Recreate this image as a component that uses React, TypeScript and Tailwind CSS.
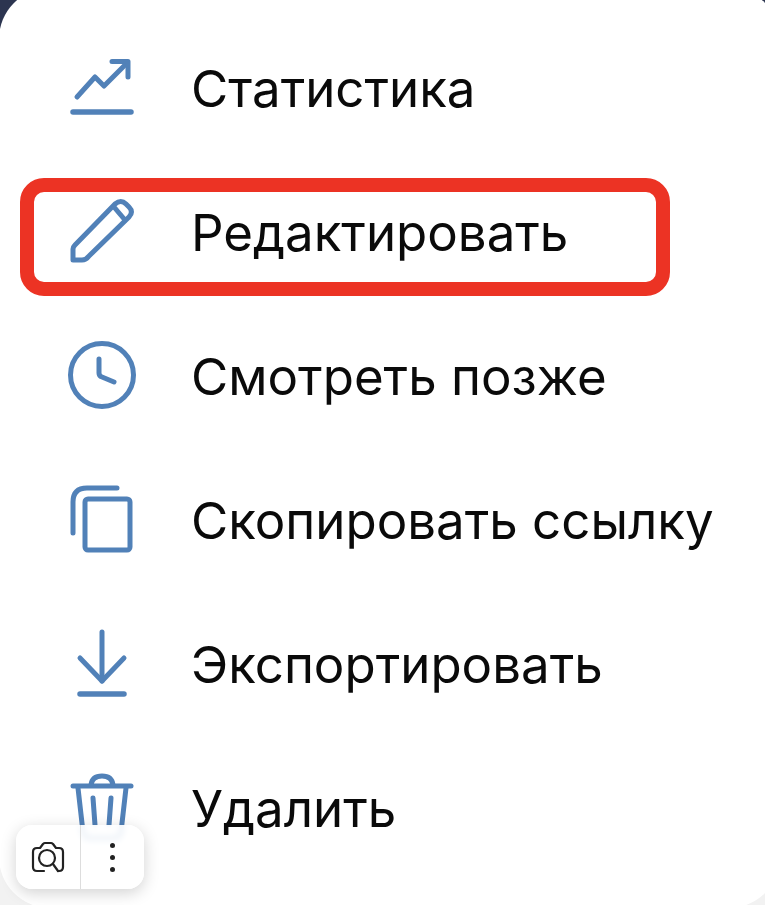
import type { ReactNode } from "react";

const icon = "h-[72px] w-[72px] shrink-0 text-[#5181b8]";

const items: { label: string; icon: ReactNode }[] = [
  {
    label: "Статистика",
    icon: (
      <svg className={icon} viewBox="0 0 72 72" fill="none" stroke="currentColor" strokeWidth="5" strokeLinecap="round" strokeLinejoin="round">
        <path d="M7 60 H65" strokeWidth="5.5" />
        <path d="M11 45 L29 25 L38 34 L61 11" />
        <path d="M46 9.5 H62 V25" />
      </svg>
    ),
  },
  {
    label: "Редактировать",
    icon: (
      <svg className={icon} viewBox="0 0 72 72" fill="none" stroke="currentColor" strokeWidth="5" strokeLinecap="round" strokeLinejoin="round">
        <path d="M7 64 L7 53 Q7 51 9 49 L49 8 Q55 3 60 8 L63 11 Q68 16 63 21 L23 60 Q20 64 16 64 Z" />
        <path d="M48 11 L59 24" />
      </svg>
    ),
  },
  {
    label: "Смотреть позже",
    icon: (
      <svg className={icon} viewBox="0 0 72 72" fill="none" stroke="currentColor" strokeWidth="5" strokeLinecap="round" strokeLinejoin="round">
        <circle cx="36" cy="35" r="31.5" />
        <path d="M33 19 V33 Q33 36 36 37 L48 42" />
      </svg>
    ),
  },
  {
    label: "Скопировать ссылку",
    icon: (
      <svg className={icon} viewBox="0 0 72 72" fill="none" stroke="currentColor" strokeWidth="5" strokeLinecap="round" strokeLinejoin="round">
        <rect x="19" y="15" width="45" height="51" rx="3" />
        <path d="M7 49 V18 Q7 4 21 4 H51" />
      </svg>
    ),
  },
  {
    label: "Экспортировать",
    icon: (
      <svg className={icon} viewBox="0 0 72 72" fill="none" stroke="currentColor" strokeWidth="5" strokeLinecap="round" strokeLinejoin="round">
        <path d="M14 66 H58" strokeWidth="5.5" />
        <path d="M36 4 V53" />
        <path d="M14 30 L36 53 L58 30" />
      </svg>
    ),
  },
  {
    label: "Удалить",
    icon: (
      <svg className={icon} viewBox="0 0 72 72" fill="none" stroke="currentColor" strokeWidth="5" strokeLinecap="round" strokeLinejoin="round">
        <path d="M7 14 H65" />
        <path d="M25 13 Q26 4 36 4 Q46 4 47 13" />
        <path d="M12 16 L17 60 Q18 66 24 66 H48 Q54 66 55 60 L60 16" />
        <path d="M27 26 L29 53" />
        <path d="M45 26 L43 53" />
      </svg>
    ),
  },
];

export default function App() {
  return (
    <div className="relative h-[905px] w-[765px] overflow-hidden bg-[linear-gradient(to_bottom,#2c3550_0,#2c3550_100px,#f2f2f2_100px)] font-['Inter','Liberation_Sans',sans-serif]">
      <ul className="-ml-px -mt-3 flex h-[920px] w-[781px] flex-col rounded-[51px] bg-white pl-[67px] pt-[28px]">
        {items.map((item) => (
          <li key={item.label} className="flex h-[144px] items-center gap-[53px]">
            {item.icon}
            <span className="whitespace-nowrap text-[51px] font-[410] leading-none text-[#0a0a0a]">{item.label}</span>
          </li>
        ))}
      </ul>
      <div className="absolute left-[20px] top-[178px] h-[118px] w-[650px] rounded-[24px] border-[14px] border-[#ec3324]" />
      <div className="absolute left-[16px] top-[825px] flex h-[64px] w-[128px] rounded-[16px] bg-white/90 shadow-[0_4px_16px_rgba(0,0,0,0.18)] backdrop-blur-[3px]">
        <div className="flex w-[65px] items-center justify-center border-r border-[#dddddd]">
          <svg className="h-[34px] w-[34px] text-[#222222]" viewBox="0 0 34 34" fill="none" stroke="currentColor" strokeWidth="2.2" strokeLinecap="round" strokeLinejoin="round">
            <path d="M13 31 H6 Q2 31 2 27 V12 Q2 8 6 8 H9 L12 4 Q13 3 14 3 H20 Q21 3 22 4 L25 8 H28 Q32 8 32 12 V27 Q32 31 28 31 H27" />
            <circle cx="16" cy="18" r="8" />
            <path d="M22 24 L27 31" />
          </svg>
        </div>
        <div className="flex flex-1 flex-col items-center justify-center gap-[7px]">
          <span className="h-[5px] w-[5px] rounded-full bg-[#222222]" />
          <span className="h-[5px] w-[5px] rounded-full bg-[#222222]" />
          <span className="h-[5px] w-[5px] rounded-full bg-[#222222]" />
        </div>
      </div>
    </div>
  );
}
